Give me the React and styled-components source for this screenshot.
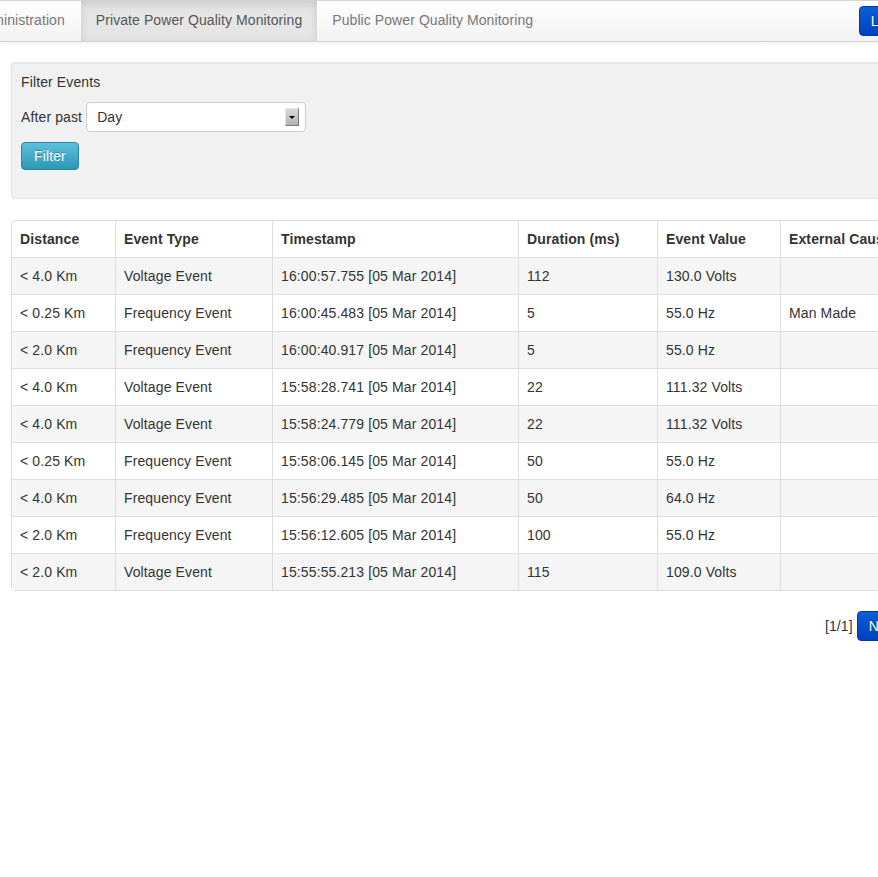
import React from 'react';
import styled, { createGlobalStyle } from 'styled-components';

const GlobalStyle = createGlobalStyle`
  html, body {
    margin: 0;
    padding: 0;
    background: #fff;
    overflow: hidden;
  }
  body {
    font-family: "Liberation Sans", Arial, sans-serif;
    font-size: 14px;
    line-height: 20px;
    letter-spacing: 0.12px;
    color: #333;
  }
`;

const Page = styled.div`
  width: 878px;
  height: 877px;
  overflow: hidden;
`;

const Navbar = styled.div`
  height: 40px;
  background: linear-gradient(to bottom, #ffffff, #f2f2f2);
  border-top: 1px solid #d4d4d4;
  border-bottom: 1px solid #d4d4d4;
  box-shadow: 0 1px 4px rgba(0, 0, 0, 0.065);
`;

const NavInner = styled.div`
  display: flex;
  align-items: stretch;
  height: 40px;
  width: 970px;
  margin-left: -40px;
  letter-spacing: 0.08px;
`;

const NavTab = styled.div`
  display: flex;
  align-items: center;
  padding: 0 15px 2px;
  margin-right: ${(p) => (p.$gap ? '1px' : '0')};
  color: ${(p) => (p.$active ? '#555' : '#777')};
  background: ${(p) => (p.$active ? '#e5e5e5' : 'transparent')};
  box-shadow: ${(p) => (p.$active ? 'inset 0 3px 8px rgba(0,0,0,0.125)' : 'none')};
  white-space: nowrap;
`;

const NavRight = styled.div`
  margin-left: auto;
  display: flex;
  align-items: flex-start;
  padding: 5px 4px 0 0;
`;

const PrimaryButton = styled.button`
  font-family: inherit;
  font-size: 14px;
  line-height: 20px;
  letter-spacing: inherit;
  height: ${(p) => p.$h || 30}px;
  padding: 0 11px;
  color: #fff;
  border: 1px solid #0038a8;
  border-radius: 4px;
  background: linear-gradient(to bottom, #0a5fd8, #0040c0);
  text-shadow: 0 -1px 0 rgba(0, 0, 0, 0.25);
`;

const Content = styled.div`
  width: 899px;
  margin: 20px 0 0 11px;
`;

const Well = styled.div`
  background: #f1f1f1;
  border: 1px solid #e3e3e3;
  border-radius: 4px;
  box-shadow: inset 0 1px 1px rgba(0, 0, 0, 0.05);
  padding: 9px 9px 28px;
`;

const WellTitle = styled.div`
  margin-bottom: 10px;
`;

const FormRow = styled.div`
  display: flex;
  align-items: center;
  gap: 4px;
  margin-bottom: 10px;
`;

const FakeSelect = styled.div`
  box-sizing: border-box;
  width: 220px;
  height: 30px;
  display: flex;
  align-items: center;
  justify-content: space-between;
  padding: 0 6px 0 10px;
  background: #fff;
  border: 1px solid #ccc;
  border-radius: 4px;
  color: #333;
`;

const Arrow = styled.span`
  box-sizing: border-box;
  width: 14px;
  height: 18px;
  background: linear-gradient(to bottom, #d8d8d8, #b4b4b4);
  border: 1px solid #7a7a7a;
  border-top-color: #e4e4e4;
  border-left-color: #e4e4e4;
  display: flex;
  align-items: center;
  justify-content: center;
  &::after {
    content: '';
    border-left: 3px solid transparent;
    border-right: 3px solid transparent;
    border-top: 3px solid #000;
  }
`;

const InfoButton = styled.button`
  font-family: inherit;
  font-size: 14px;
  line-height: 20px;
  letter-spacing: inherit;
  height: 28px;
  padding: 0 12px;
  color: #fff;
  border: 1px solid #2a85a0;
  border-radius: 4px;
  background: linear-gradient(to bottom, #5bc0de, #2f96b4);
  text-shadow: 0 -1px 0 rgba(0, 0, 0, 0.25);
`;

const Table = styled.table`
  width: 100%;
  margin-top: 21px;
  border-collapse: separate;
  border-spacing: 0;
  border: 1px solid #ddd;
  border-radius: 4px;
  table-layout: fixed;

  th, td {
    padding: 8px;
    line-height: 20px;
    text-align: left;
    border-left: 1px solid #ddd;
    border-top: 1px solid #ddd;
    white-space: nowrap;
    overflow: hidden;
    height: 20px;
  }
  th:first-child, td:first-child {
    border-left: none;
  }
  thead th {
    border-top: none;
    font-weight: bold;
  }
  tbody tr:nth-child(odd) td {
    background: #f5f5f5;
  }
`;

const Pager = styled.div`
  display: flex;
  justify-content: flex-end;
  align-items: center;
  gap: 4px;
  margin-top: 20px;
`;

const cols = [103, 157, 246, 139, 123, 131];
const headers = ['Distance', 'Event Type', 'Timestamp', 'Duration (ms)', 'Event Value', 'External Cause'];

const rows = [
  ['< 4.0 Km', 'Voltage Event', '16:00:57.755 [05 Mar 2014]', '112', '130.0 Volts', ''],
  ['< 0.25 Km', 'Frequency Event', '16:00:45.483 [05 Mar 2014]', '5', '55.0 Hz', 'Man Made'],
  ['< 2.0 Km', 'Frequency Event', '16:00:40.917 [05 Mar 2014]', '5', '55.0 Hz', ''],
  ['< 4.0 Km', 'Voltage Event', '15:58:28.741 [05 Mar 2014]', '22', '111.32 Volts', ''],
  ['< 4.0 Km', 'Voltage Event', '15:58:24.779 [05 Mar 2014]', '22', '111.32 Volts', ''],
  ['< 0.25 Km', 'Frequency Event', '15:58:06.145 [05 Mar 2014]', '50', '55.0 Hz', ''],
  ['< 4.0 Km', 'Frequency Event', '15:56:29.485 [05 Mar 2014]', '50', '64.0 Hz', ''],
  ['< 2.0 Km', 'Frequency Event', '15:56:12.605 [05 Mar 2014]', '100', '55.0 Hz', ''],
  ['< 2.0 Km', 'Voltage Event', '15:55:55.213 [05 Mar 2014]', '115', '109.0 Volts', ''],
];

function App() {
  return (
    <Page>
      <GlobalStyle />
      <Navbar>
        <NavInner>
          <NavTab $gap>Administration</NavTab>
          <NavTab $active>Private Power Quality Monitoring</NavTab>
          <NavTab>Public Power Quality Monitoring</NavTab>
          <NavRight>
            <PrimaryButton>Logout</PrimaryButton>
          </NavRight>
        </NavInner>
      </Navbar>

      <Content>
        <Well>
          <WellTitle>Filter Events</WellTitle>
          <FormRow>
            <span>After past</span>
            <FakeSelect>
              <span>Day</span>
              <Arrow />
            </FakeSelect>
          </FormRow>
          <InfoButton>Filter</InfoButton>
        </Well>

        <Table>
          <colgroup>
            {cols.map((w, i) => (
              <col key={i} style={{ width: w }} />
            ))}
          </colgroup>
          <thead>
            <tr>
              {headers.map((h) => (
                <th key={h}>{h}</th>
              ))}
            </tr>
          </thead>
          <tbody>
            {rows.map((r, i) => (
              <tr key={i}>
                {r.map((c, j) => (
                  <td key={j}>{c}</td>
                ))}
              </tr>
            ))}
          </tbody>
        </Table>

        <Pager>
          <span>[1/1]</span>
          <PrimaryButton>Next</PrimaryButton>
        </Pager>
      </Content>
    </Page>
  );
}

export default App;
